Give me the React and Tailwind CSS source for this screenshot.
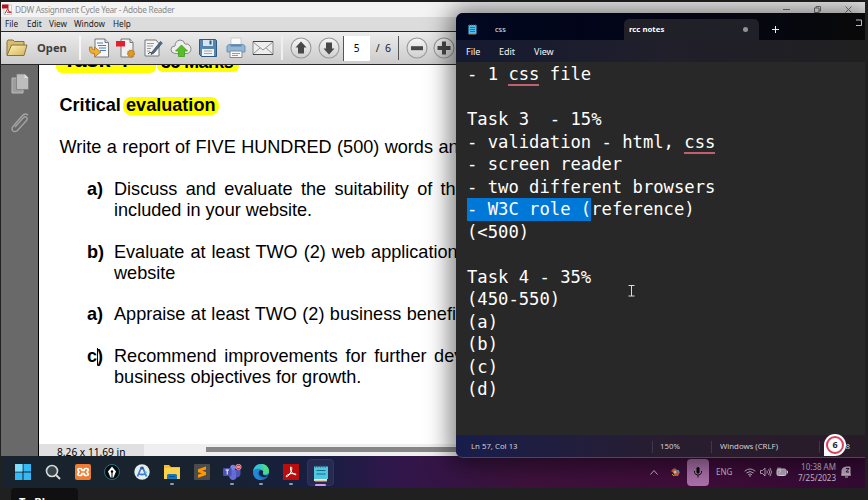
import React from "react";

const ui = "font-['Noto_Sans','Open_Sans',sans-serif]";

function Svg({ w, h, vb, className = "", children }) {
  return (
    <svg width={w} height={h} viewBox={vb || `0 0 ${w} ${h}`} className={`block shrink-0 ${className}`}>
      {children}
    </svg>
  );
}

function ToolCell({ children }) {
  return <div className="flex w-[27.4px] shrink-0 items-center justify-center">{children}</div>;
}

function RoundButton({ children }) {
  return (
    <Svg w={22} h={22}>
      <circle cx="11" cy="11" r="10" fill="url(#knob)" stroke="#999" strokeWidth="1.1" />
      {children}
    </Svg>
  );
}

function Toolbar() {
  return (
    <div className="flex h-[34px] shrink-0 items-center border-y border-[#29292b] bg-gradient-to-b from-[#ececec] to-[#cbcbcb]">
      <svg width="0" height="0" className="absolute">
        <defs>
          <linearGradient id="knob" x1="0" y1="0" x2="0" y2="1">
            <stop offset="0" stopColor="#f7f7f7" />
            <stop offset="1" stopColor="#cfcfcf" />
          </linearGradient>
          <linearGradient id="folder" x1="0" y1="0" x2="1" y2="1">
            <stop offset="0" stopColor="#fff3b8" />
            <stop offset="1" stopColor="#d3b259" />
          </linearGradient>
        </defs>
      </svg>
      <Svg w={24} h={20} className="ml-[4px]">
        <path d="M2 17V3.500L3 2h5l1.500 1.500H19V7" fill="#d8bd70" stroke="#84713f" />
        <path d="M2 17.500 6.500 7H22l-3 10.500z" fill="url(#folder)" stroke="#84713f" />
      </Svg>
      <span className={`ml-[8px] w-[30px] text-[11.2px] font-bold leading-none text-[#3e3e3e] ${ui}`}>Open</span>
      <div className="ml-[12px] h-6 w-[2px] bg-[#f6f6f6]" />
      <div className="ml-[4px] flex items-center">
        <ToolCell>
          <Svg w={22} h={22}>
            <path d="M7 2h10l3.500 3.500V20H7z" fill="#f5f7fa" stroke="#777" />
            <path d="M17 2v3.500h3.500" fill="#ddd" stroke="#777" />
            <path d="M9 6h6M10 8.500h8M11 11h7M12 13.500h6" stroke="#4f7cbc" />
            <path d="M1.500 10q-1 7 5 6.500V20l6.500-5-6.500-5v3q-3 .5-2.500-3z" fill="#f0ae35" stroke="#a87520" strokeWidth=".8" />
          </Svg>
        </ToolCell>
        <ToolCell>
          <Svg w={22} h={22}>
            <path d="M6 2h9l3 3.500V20H6z" fill="#f1f1f1" stroke="#777" />
            <path d="M15 2v3.500h3" fill="#ddd" stroke="#777" />
            <path d="M1 4h9v5.500H1z" fill="#e3202c" />
            <circle cx="16" cy="16.500" r="3.300" fill="#dc9a27" stroke="#bd8128" strokeWidth="1.500" strokeDasharray="1.500 .7" />
          </Svg>
        </ToolCell>
        <ToolCell>
          <Svg w={20} h={20}>
            <path d="M2 2h11l3 3.500V18H2z" fill="#f5f5f5" stroke="#777" />
            <path d="M4 5.500h7M4 8h6M4 10.500h4M4 13h3" stroke="#9a9a9a" />
            <path d="m9 14 8.500-10.500 1.800 1.500L11 15l-3 1.500z" fill="#526d83" stroke="#3e4e5d" strokeWidth=".8" />
            <path d="M5 16q2-3 4-1" fill="none" stroke="#444" />
          </Svg>
        </ToolCell>
        <ToolCell>
          <Svg w={22} h={20}>
            <path d="M5 15.500Q1 15 1 11.500 1 8 5 8q0-5 5-6 4 0 5 4 5-.5 6 4.500 0 5-5 5z" fill="#eee" stroke="#888" />
            <path d="m11.500 7 6 6h-3v5.500h-6V13h-3z" fill="#5bbd24" stroke="#379519" strokeWidth=".7" />
          </Svg>
        </ToolCell>
        <ToolCell>
          <Svg w={20} h={20}>
            <path d="M1.500 1.500h16l1 1v16h-15l-2-2z" fill="#5685af" stroke="#31597d" />
            <path d="M5 2h10v6H5z" fill="#d5e6f2" />
            <path d="M11.500 2.500h2v4h-2z" fill="#31597d" />
            <path d="M4 11h12v7H4z" fill="#f0f2f3" />
            <path d="M6 13h8M6 15.500h8" stroke="#9ba6af" />
          </Svg>
        </ToolCell>
        <ToolCell>
          <Svg w={20} h={22}>
            <path d="M5 1h10v8H5z" fill="#fafafa" stroke="#bbb" strokeWidth=".7" />
            <path d="M3 7.500 1 9v6h18V9l-2-1.500z" fill="#8fb8da" stroke="#6f93b3" />
            <path d="M4.500 8h11v1.500h-11z" fill="#5e87a8" />
            <path d="M4 14h12v6.500H4z" fill="#f9f9f9" stroke="#888" />
            <path d="M6 16.500h8M6 18.500h6" stroke="#999" />
          </Svg>
        </ToolCell>
        <ToolCell>
          <Svg w={22} h={16}>
            <path d="M1 1.500h20v13H1z" fill="#eee" stroke="#888" />
            <path d="m1 2 10 8L21 2M1 14l7-6M21 14l-7-6" fill="none" stroke="#888" strokeWidth=".9" />
            <path d="M1 1.500h20M1 14.500h20" stroke="#444" />
          </Svg>
        </ToolCell>
      </div>
      <div className="ml-[4px] h-6 w-[2px] bg-[#f0f0f0]" />
      <div className="ml-[7px] flex items-center gap-[6px]">
        <RoundButton><path d="m11 4.500 5.500 6H14v6H8v-6H5.500z" fill="#484848" /></RoundButton>
        <RoundButton><path d="m11 17.500 5.500-6H14v-6H8v6H5.500z" fill="#484848" /></RoundButton>
      </div>
      <div className={`ml-[3px] flex h-[25px] w-[27px] shrink-0 items-center justify-center border-l border-[#555] bg-white text-[10px] text-black ${ui}`}>5</div>
      <span className={`ml-[6px] w-[22px] shrink-0 whitespace-pre text-[10.5px] leading-none text-[#222] ${ui}`}>/  6</span>
      <div className="h-6 w-px bg-[#555]" />
      <div className="ml-[7px] flex items-center gap-[5px]">
        <RoundButton><path d="M5 9.200h12v4H5z" fill="#484848" /></RoundButton>
        <RoundButton><path d="M9 4.500h4V9h4.500v4H13v4.500H9V13H4.500V9H9z" fill="#484848" /></RoundButton>
      </div>
    </div>
  );
}

function Item({ mark, caret, children, className = "" }) {
  return (
    <div className={`flex ${className}`}>
      <span className="flex w-[27px] shrink-0 font-bold">
        {mark[0]}
        {caret && <i className="-mr-px mt-[2px] h-[17px] w-px bg-black" />}
        {mark[1]}
      </span>
      <div>{children}</div>
    </div>
  );
}

function Page() {
  return (
    <div className="h-[379px] overflow-hidden whitespace-nowrap bg-white pl-[20px] font-['Liberation_Sans',Arial,sans-serif] text-[18.1px] leading-[21px] text-black">
      <div className="-ml-[3px] flex h-[8px] items-end overflow-hidden font-bold">
        <span className="w-[100px] shrink-0 rounded-b-md bg-[#ffff00] pl-[7px] text-[21.500px] leading-[25px]">Task 4</span>
        <span className="mb-px ml-px w-[82px] shrink-0 rounded-b-md bg-[#ffff00] pl-[4px] text-[17.800px] leading-[19px] tracking-[-0.500px]">35 Marks</span>
      </div>
      <div className="mt-[22px] flex items-center pl-[0.500px] font-bold">
        <span className="w-[63.500px]">Critical</span>
        <span className="h-[18px] rounded-[8px] bg-[#ffff00] px-[3px] leading-[17px]">evaluation</span>
      </div>
      <p className="mt-[21px] pl-[0.500px] [word-spacing:0.400px]">Write a report of FIVE HUNDRED (500) words and</p>
      <div className="pl-[28px]">
        <Item mark="a)" className="mt-[21px]">
          <p className="[word-spacing:3.300px]">Discuss and evaluate the suitability of the</p>
          <p>included in your website.</p>
        </Item>
        <Item mark="b)" className="mt-[21px]">
          <p className="[word-spacing:1px]">Evaluate at least TWO (2) web application</p>
          <p>website</p>
        </Item>
        <Item mark="a)" className="mt-[20px]">
          <p className="[word-spacing:0.400px]">Appraise at least TWO (2) business benefits</p>
        </Item>
        <Item mark="c)" caret className="mt-[21px]">
          <p className="[word-spacing:2.600px]">Recommend improvements for further development</p>
          <p>business objectives for growth.</p>
        </Item>
      </div>
    </div>
  );
}

function Reader() {
  return (
    <div className="absolute left-[1px] top-[2px] flex h-[454px] w-[864px] flex-col overflow-hidden bg-[#f3f3f3]">
      <div className={`flex h-[15px] shrink-0 items-center text-[8.3px] text-[#8b8b8b] ${ui}`}>
        <Svg w={10} h={11} className="ml-[1px]">
          <path d="M2 1h7.500v9.500H2z" fill="#fff" stroke="#aaa" strokeWidth=".6" />
          <path d="M0 .5h6.500v4H0z" fill="#b5131f" />
          <path d="M3 9.500 5.800 4.500l1 3 2.500.8H5" fill="none" stroke="#b5131f" strokeWidth=".9" />
        </Svg>
        <span className="ml-[3px] pt-px tracking-[-0.310px]">DDW Assignment Cycle Year - Adobe Reader</span>
        <div className="ml-auto flex items-center gap-[24px] pr-[13px]">
          <Svg w={7} h={7}><path d="M0 3.500h7" stroke="#777" /></Svg>
          <Svg w={7} h={7}><path d="M.5 2h4.500v4.500H.5zM2 2V.5h4.500V5H5" fill="none" stroke="#777" /></Svg>
          <Svg w={7} h={7}><path d="m.5.5 6 6m0-6-6 6" stroke="#777" /></Svg>
        </div>
      </div>
      <div className={`flex h-[14px] shrink-0 items-center bg-[#dcdcdc] pl-[4px] text-[8.2px] text-[#1a1a1a] ${ui}`}>
        <span className="w-[22px]">File</span>
        <span className="w-[22px]">Edit</span>
        <span className="w-[25px]">View</span>
        <span className="w-[39px]">Window</span>
        <span>Help</span>
      </div>
      <Toolbar />
      <div className="flex h-[391px] shrink-0">
        <div className="flex w-[38px] shrink-0 flex-col items-center border-r border-black bg-[#696969] pt-[8px]">
          <Svg w={20} h={22}>
            <path d="M2 5h8l3 3v12H2z" fill="#9d9d9d" stroke="#bbb" />
            <path d="M6.500 1h8l4 4v11.500h-12z" fill="#bdbdbd" stroke="#777" strokeWidth=".7" />
            <path d="M14.500 1v4h4" fill="#e0e0e0" />
          </Svg>
          <Svg w={20} h={22} className="mt-[17px]">
            <path d="m5 15 8-9q2-2 3.500-.7 1.500 1.500 0 3.200L7.500 18.500q-2.500 2-4.500.5-2-2 0-4.500L12 4q3-3.500 6-1" fill="none" stroke="#a5a5a5" strokeWidth="1.300" />
          </Svg>
        </div>
        <div className="flex flex-1 flex-col bg-[#efefef]">
          <Page />
          <div className="flex h-3 overflow-hidden">
            <div className={`w-[105px] shrink-0 bg-[#e0e0e0] pl-[18px] pt-px text-[10.200px] leading-[14px] text-black ${ui}`}>8.26 x 11.69 in</div>
            <div className="ml-[62px] mt-[3px] h-[5px] flex-1 bg-[#868686]" />
          </div>
        </div>
      </div>
    </div>
  );
}

function Misspelt({ children }) {
  return <span className="inline-block h-[23px] border-b-2 border-[#c15e70]">{children}</span>;
}

function Notepad() {
  return (
    <div className="absolute left-[456px] top-[13px] flex h-[445px] w-[409px] flex-col overflow-hidden rounded-l-[7px] border-b border-[#514654] bg-[#282828] shadow-[0_1px_24px_6px_rgba(0,0,0,0.5)]">
      <div className={`flex h-[27px] shrink-0 items-end bg-gradient-to-r from-[#010820] via-[#030416] to-[#090909] text-[8px] text-[#e2e2e2] ${ui}`}>
        <div className="flex h-[21px] w-[168px] items-center">
          <Svg w={9} h={11} className="ml-[12px]">
            <path d="M.5 1h8v9h-8z" fill="#50bdec" />
            <path d="M.5 10h7.500" stroke="#bc7b41" />
            <path d="M2 3.500h5M2 5.500h5M2 7.500h5M1.500.3v1.400M3.500.3v1.400M5.500.3v1.400M7.500.3v1.400" stroke="#126389" strokeWidth=".8" />
          </Svg>
          <span className="ml-[18px] text-[7.500px]">css</span>
        </div>
        <div className="flex h-[21px] w-[135px] items-center rounded-t-[5px] bg-[#202028] pl-[5px] pr-[11px] font-bold text-[7.800px] text-white">
          rcc notes
          <i className="ml-auto size-[5px] rounded-full bg-[#929292]" />
        </div>
        <div className="flex h-[21px] flex-1 items-center pl-[13px]">
          <Svg w={7} h={7}><path d="M0 3.500h7M3.500 0v7" stroke="#eee" /></Svg>
          <Svg w={6} h={7} className="-mt-[15px] ml-auto mr-[3px]"><path d="M0 1h5.500v5.500H0" fill="none" stroke="#bbb" /></Svg>
        </div>
      </div>
      <div className={`flex h-[22px] shrink-0 items-center bg-gradient-to-r from-[#151a31] via-[#201f2b] to-[#202021] pl-[10px] pt-px text-[9px] text-[#f5f5f5] ${ui}`}>
        <span className="w-[33px]">File</span>
        <span className="w-[35px]">Edit</span>
        <span>View</span>
      </div>
      <div className="h-[373px] shrink-0 whitespace-pre pl-[11px] pt-px font-['DejaVu_Sans_Mono',monospace] text-[17.190px] leading-[22.500px] text-white">
        <div className="h-[22.500px]">- 1 <Misspelt>css</Misspelt> file</div>
        <div className="h-[22.500px]" />
        <div className="h-[22.500px]">Task 3  - 15%</div>
        <div className="h-[22.500px]">- validation - html, <Misspelt>css</Misspelt></div>
        <div className="h-[22.500px]">- screen reader</div>
        <div className="h-[22.500px]">- two different browsers</div>
        <div className="h-[22.500px]"><span className="inline-block h-[22.500px] bg-[#0078d7]">- W3C role (</span>reference)</div>
        <div className="h-[22.500px]">{"(<500)"}</div>
        <div className="h-[22.500px]" />
        <div className="h-[22.500px]">Task 4 - 35%</div>
        <div className="h-[22.500px]">(450-550)</div>
        <div className="h-[22.500px]">(a)</div>
        <div className="h-[22.500px]">(b)</div>
        <div className="h-[22.500px]">(c)</div>
        <div className="h-[22.500px]">(d)</div>
      </div>
      <div className={`flex flex-1 items-center bg-gradient-to-r from-[#171d4b] via-[#281d31] to-[#291a27] pl-[15px] pt-[2px] text-[7.800px] text-[#d0d0d5] ${ui}`}>
        <span className="w-[181px]">Ln 57, Col 13</span>
        <span className="flex h-3 w-[59px] items-center border-l border-[#423747] pl-[7px]">150%</span>
        <span className="flex h-3 w-[108px] items-center border-l border-[#423747] pl-[8px]">Windows (CRLF)</span>
        <span className="flex h-3 flex-1 items-center justify-end border-l border-[#423747] pr-[15px]">8</span>
      </div>
    </div>
  );
}

function AppIcon({ running, active, children }) {
  return (
    <div className="flex w-[29.800px] shrink-0 justify-center">
      <div className={`flex h-[27px] w-[27px] flex-col items-center rounded pt-[5px] ${active ? "border border-[#343458] bg-[#262a50] pt-[4px]" : ""}`}>
        {children}
        {running && <i className={`h-[2px] shrink-0 rounded ${active ? "mt-[2px] w-[11px] bg-[#d69be3]" : "mt-[3px] w-1 bg-[#929aa5]"}`} />}
      </div>
    </div>
  );
}

function Taskbar() {
  return (
    <div className="absolute left-[1px] top-[456px] flex h-8 w-[864px] items-center bg-[linear-gradient(90deg,#18232e_0%,#18232f_23%,#171e42_37%,#31164b_46%,#3d123d_60%,#400d3b_80%,#330a34_100%)] pl-[7.100px]">
      <AppIcon>
        <Svg w={16} h={16}><path d="M0 0h7.500v7.500H0zM8.500 0H16v7.500H8.500zM0 8.500h7.500V16H0zM8.500 8.500H16V16H8.500z" fill="#35b9f4" /><path d="M0 0h7.500v7.500H0z" fill="#7fdcfb" /></Svg>
      </AppIcon>
      <AppIcon>
        <Svg w={16} h={16}><circle cx="7" cy="7" r="5.500" fill="#39434b" stroke="#dadada" strokeWidth="1.600" /><path d="m11 11 4 4" stroke="#dadada" strokeWidth="2" /></Svg>
      </AppIcon>
      <AppIcon>
        <Svg w={16} h={16}><rect width="16" height="16" rx="2" fill="#ed7d32" /><path d="M5 4.500q-3 0-2 2L4 8l-1 1.500q-1 2 2 2 2 0 2-2h2q0 2 2 2 3 0 2-2L12 8l1-1.500q1-2-2-2-2 0-2 2H7q0-2-2-2z" fill="none" stroke="#fff" strokeWidth="1.700" /></Svg>
      </AppIcon>
      <AppIcon>
        <Svg w={16} h={16}><circle cx="8" cy="8" r="7.500" fill="#030b0d" stroke="#2d7180" /><path d="m8 2.500 4 5-2.500 6h-3L4 7.500z" fill="#fff" /><circle cx="8" cy="7.500" r="1.200" /><path d="M8 8v5.500" stroke="#000" /></Svg>
      </AppIcon>
      <AppIcon>
        <Svg w={16} h={16}><circle cx="8" cy="8" r="7.700" fill="#e5eeee" /><path d="m7.500 3-4 9.500M8.500 3l4 9.500M4 9.500q4 2 8 0" fill="none" stroke="#3c7bd7" strokeWidth="1.800" /><circle cx="8" cy="4" r="1.500" fill="#325b87" /><path d="m10.500 7 3 1-2 2z" fill="#56d991" /></Svg>
      </AppIcon>
      <AppIcon running>
        <Svg w={16} h={16}><path d="M0 2V1h5l2 2h9v12H0z" fill="#f9bd27" /><path d="M0 4h16v11H0z" fill="#ffd04a" /><path d="M3 15v-4l1-1h8l1 1v4z" fill="#1777bd" /><path d="M5 12.500h6" stroke="#0b4d84" /></Svg>
      </AppIcon>
      <AppIcon>
        <Svg w={16} h={16}><rect width="16" height="16" rx="1" fill="#4b4b4b" /><path d="m12 2.500-8 2.700v3l4 1-4 1.500v3l8-2.700V8L8 6.800l4-1.300z" fill="#ff9800" /></Svg>
      </AppIcon>
      <AppIcon running>
        <Svg w={20} h={16}><circle cx="11" cy="3.500" r="2.700" fill="#7c82e0" /><path d="M7 6h8v6q-1 4-4 4t-4-4z" fill="#666cd3" /><path d="M14 6h4.500v4q-1 4-4.500 3z" fill="#5056b5" /><rect x="1" y="4" width="8.500" height="8" rx="1" fill="#4752b2" /><path d="M3.500 6H7M5.200 6v4.500" stroke="#fff" /><circle cx="16.500" cy="3" r="2.700" fill="#ca2d42" stroke="#eee" strokeWidth=".6" /><path d="M15 3h3" stroke="#fff" /></Svg>
      </AppIcon>
      <AppIcon running>
        <Svg w={16} h={16}><circle cx="8" cy="8" r="8" fill="#1975ca" /><path d="M0 7Q2 0 8 0q7 0 8 7 0 4-5 3.500-2 0-1-2Q7 2 0 7z" fill="#36c6c9" /><path d="M8 0q7 0 8 7 0 4-5 3.500l-1-2q2-4-2-8.500" fill="#51d980" /><path d="M7 6q4 0 3 3-1 3 5 2.500-3 3-7 1-4-3-1-6.500" fill="#172544" /><path d="M0 7q4-4 8-1-4 1-3 5 1 4 5 4.800Q0 17 0 7z" fill="#2388d1" /></Svg>
      </AppIcon>
      <AppIcon running>
        <Svg w={16} h={16}><rect width="16" height="16" fill="#bc0d0d" /><path d="M7.500 3q2-.5 1 3.500-1.500 4-4 6-2 1-1-1 3-2.500 8-2 2.500.8 1 1.500-3-.5-5-5V3" fill="none" stroke="#fff" strokeWidth="1" /></Svg>
      </AppIcon>
      <AppIcon running active>
        <Svg w={14} h={17}><path d="M0 1.500h14v12.500H0z" fill="#50c7e0" /><path d="M0 14h13v2H0z" fill="#e8ead5" /><path d="M1 16.200h12" stroke="#d38d42" /><path d="M2.500 5.500h9M2.500 9h9" stroke="#176c88" /><path d="M1.500.5v2M4 .5v2M6.500.5v2M9 .5v2M11.500.5v2" stroke="#266073" /></Svg>
      </AppIcon>
      <div className={`ml-auto flex items-center text-[8px] text-[#cbbfd0] ${ui}`}>
        <Svg w={8} h={5}><path d="m.5 4.500 3.500-4 3.500 4" fill="none" stroke="#c6bbc9" /></Svg>
        <Svg w={11} h={9} className="ml-[12px]"><path d="M1 3q3-4 5-2l4 3-2 4H4q1-3-3-5" fill="#cf6538" /><path d="M6 2h3v3z" fill="#5da6d3" /><circle cx="5" cy="4" r="1.500" fill="#ead5b8" /><path d="m2 6 2 2" stroke="#d4ad4e" /></Svg>
        <div className="ml-[6px] flex h-[27px] w-[22px] items-center justify-center rounded bg-[#aa70ab]">
          <Svg w={10} h={12}><rect x="3.500" y="1" width="3" height="6.500" rx="1.500" /><path d="M1.500 5v1.500Q2 9 5 9t3.500-2.500V5M5 9v2.500" fill="none" stroke="#111" /></Svg>
        </div>
        <span className="ml-[7px] w-[17px]">ENG</span>
        <Svg w={12} h={9} className="ml-[11px]"><path d="M.7 3.200q5.300-4.500 10.600 0M2.500 5q3.500-3 7 0M4.200 6.700q1.800-1.500 3.600 0" fill="none" stroke="#c8bbcb" /><circle cx="6" cy="8" r=".8" fill="#c8bbcb" /></Svg>
        <Svg w={12} h={10} className="ml-[4px]"><path d="M.5 3.500h2L5 1v8L2.500 6.500h-2zM6.800 3.500q1.200 1.500 0 3M8.500 2q2.500 3 0 6M10 .8q3 4.200 0 8.400" fill="none" stroke="#c8bbcb" strokeWidth=".9" /></Svg>
        <Svg w={12} h={10} className="ml-[4px]"><rect x="1" y="2" width="9" height="6.500" rx="1.500" fill="#b6a6ba" stroke="#ddd" /><path d="M10.500 4h1v2.500M2 .5v3M4 .5v3M1.500 3h3v2l-1.500 1" fill="none" stroke="#ddd" /></Svg>
        <div className="ml-[7px] w-[41px] text-right text-[8px] leading-[11px]">10:38 AM<br />7/25/2023</div>
        <Svg w={11} h={12} className="ml-[5px] mr-[13px]"><path d="M1 9V4q1-3 4-3h4v8zM0 9h10M4 11h3" fill="#b9aabe" stroke="#c9bccd" /><path d="M5 2.500h3L5 6h3" fill="none" stroke="#3c1439" /></Svg>
      </div>
    </div>
  );
}

export default function App() {
  return (
    <main className="relative h-[500px] w-[868px] overflow-hidden bg-[#202020]">
      <Reader />
      <Taskbar />
      <Notepad />
      <div className="absolute left-[865px] top-0 h-[500px] w-[3px] bg-[#202020]" />
      <div className="absolute left-0 top-[488px] h-[12px] w-[868px] bg-[#202020]" />
      <Svg w={7} h={12} className="absolute left-[628px] top-[285px]"><path d="M.5.500h6M3.500.5v10.500M.5 11h6" stroke="#ddd" /></Svg>
      <div className={`absolute left-[824px] top-[434px] flex size-[22px] items-center justify-center rounded-full rounded-bl-none bg-white text-[9px] font-bold text-[#1e2939] ${ui}`}>
        <span className="flex size-[18px] items-center justify-center rounded-full border-2 border-[#df3e5b]">6</span>
      </div>
      <div className={`absolute left-[11px] top-[488px] h-[12px] w-[67px] overflow-hidden rounded-t-[4px] bg-[#101010] pl-[8px] pt-[7px] text-[11px] font-bold leading-[14px] text-white ${ui}`}>To Ble</div>
    </main>
  );
}
